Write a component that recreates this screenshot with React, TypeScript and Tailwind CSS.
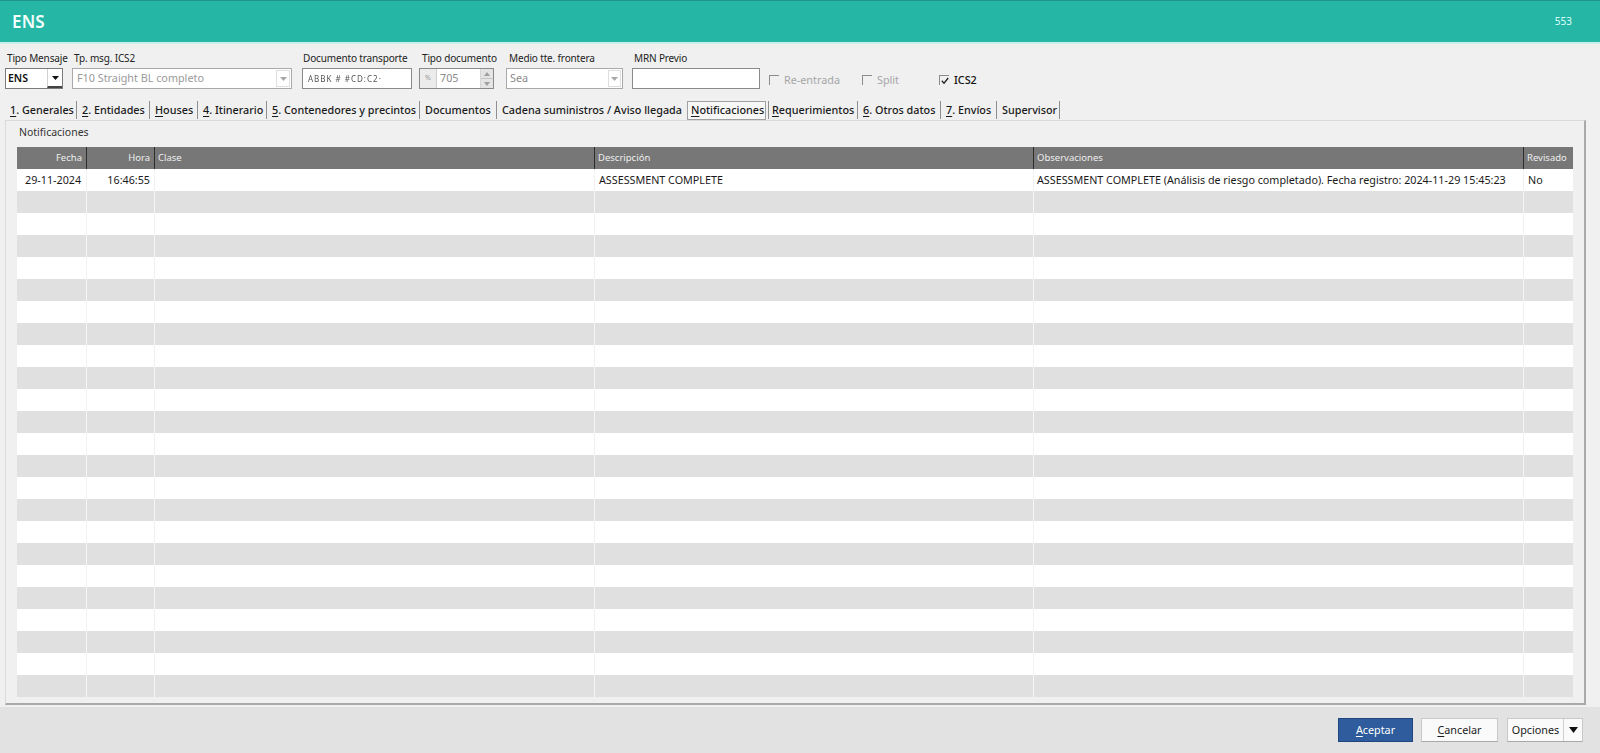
import React from "react";

type Tab = { u?: string; post: string; w: string; sep: boolean; selected?: boolean };

const tabs: Tab[] = [
  { u: "1", post: ". Generales", w: "w-[72px]", sep: true },
  { u: "2", post: ". Entidades", w: "w-[73px]", sep: true },
  { u: "H", post: "ouses", w: "w-[48px]", sep: true },
  { u: "4", post: ". Itinerario", w: "w-[69px]", sep: true },
  { u: "5", post: ". Contenedores y precintos", w: "w-[153px]", sep: true },
  { post: "Documentos", w: "w-[77px]", sep: true },
  { post: "Cadena suministros / Aviso llegada", w: "w-[190px]", sep: false },
  { u: "N", post: "otificaciones", w: "w-[82px]", sep: true, selected: true },
  { u: "R", post: "equerimientos", w: "w-[89px]", sep: true },
  { u: "6", post: ". Otros datos", w: "w-[83px]", sep: true },
  { u: "7", post: ". Envíos", w: "w-[56px]", sep: true },
  { post: "Supervisor", w: "w-[63px]", sep: true },
];

const cols = [
  { w: "w-[69px]", h: "Fecha", right: true },
  { w: "w-[68px]", h: "Hora", right: true },
  { w: "w-[440px]", h: "Clase", right: false },
  { w: "w-[439px]", h: "Descripción", right: false },
  { w: "w-[490px]", h: "Observaciones", right: false },
  { w: "w-[50px]", h: "Revisado", right: false },
];

const dataRow = [
  { t: "29-11-2024", c: "pl-[8px]" },
  { t: "16:46:55", c: "justify-end pr-[4px]" },
  { t: "", c: "" },
  { t: "ASSESSMENT COMPLETE", c: "pl-[4px]" },
  { t: "ASSESSMENT COMPLETE (Análisis de riesgo completado). Fecha registro: 2024-11-29 15:45:23", c: "pl-[3px]" },
  { t: "No", c: "pl-[4px]" },
];

function Arrow({ dark }: { dark?: boolean }) {
  return (
    <svg width="7" height="4" viewBox="0 0 7 4">
      <path d="M0 0 L7 0 L3.5 4 Z" fill={dark ? "#111" : "#a8a8a8"} />
    </svg>
  );
}

function CheckBox({ checked }: { checked?: boolean }) {
  return (
    <span className="relative inline-block w-[10px] h-[10px] border-t border-l border-[#8c8c8c] bg-transparent">
      {checked && (
        <svg className="absolute left-[1px] top-[1px]" width="8" height="8" viewBox="0 0 8 8">
          <path d="M0.8 3.8 L3 6.2 L7.2 1" stroke="#222" strokeWidth="1.3" fill="none" />
        </svg>
      )}
    </span>
  );
}

const lbl = "h-[14px] leading-[14px] text-[10px] tracking-[-0.15px] text-[#222] whitespace-nowrap";

export default function App() {
  const rows = Array.from({ length: 24 }, (_, i) => i);
  return (
    <div className="w-[1600px] h-[753px] overflow-hidden flex flex-col bg-[#f0f0f0] font-['Noto_Sans',sans-serif] text-[#1a1a1a]">
      {/* Title bar */}
      <div className="h-[44px] shrink-0 bg-[#26b6a6] border-t border-[#1e978a] border-b-2 border-b-[#c9f1ea] flex items-center justify-between pl-[12px] pr-[28px]">
        <span className="text-[17px] font-semibold text-[#f2fffc] tracking-[0.2px]">ENS</span>
        <span className="text-[10px] text-[#dcfff8]">553</span>
      </div>

      <div className="flex-1 flex flex-col">
        {/* Form row */}
        <div className="flex items-start pt-[7px] h-[55px] text-[11px]">
          <div className="ml-[5px] w-[58px] flex flex-col">
            <span className={`${lbl} pl-[2px]`}>Tipo Mensaje</span>
            <div className="mt-[3px] h-[21px] bg-white border border-[#7b7b7b] flex items-center">
              <span className="pl-[2px] text-[10.5px] font-semibold text-[#111] flex-1">ENS</span>
              <span className="w-[15px] h-[19px] border-l border-[#d0d0d0] border-b-2 border-b-[#444] flex items-center justify-center">
                <Arrow dark />
              </span>
            </div>
          </div>

          <div className="ml-[9px] w-[220px] flex flex-col">
            <span className={`${lbl} pl-[2px]`}>Tp. msg. ICS2</span>
            <div className="mt-[3px] h-[21px] bg-white border border-[#a9a9a9] flex items-center">
              <span className="pl-[4px] text-[10.8px] text-[#9a9a9a] flex-1 whitespace-nowrap">F10 Straight BL completo</span>
              <span className="w-[14px] h-[17px] mr-[1px] border border-[#dedede] flex items-center justify-center">
                <Arrow />
              </span>
            </div>
          </div>

          <div className="ml-[10px] w-[110px] flex flex-col">
            <span className={`${lbl} pl-[1px]`}>Documento transporte</span>
            <div className="mt-[3px] h-[21px] bg-white border border-[#8a8a8a] flex items-center">
              <span className="pl-[5px] text-[8px] text-[#555] tracking-[1px] blur-[0.5px] whitespace-nowrap">ABBK  #  #CD:C2·</span>
            </div>
          </div>

          <div className="ml-[7px] w-[75px] flex flex-col">
            <span className={`${lbl} pl-[3px]`}>Tipo documento</span>
            <div className="mt-[3px] h-[21px] bg-white border border-[#8a8a8a] flex items-center">
              <span className="w-[17px] h-[19px] bg-[#ececec] border-r border-[#cfcfcf] flex items-center justify-center text-[7px] text-[#999]">%</span>
              <span className="pl-[3px] text-[10.8px] text-[#8a8a8a] flex-1">705</span>
              <span className="w-[13px] h-[19px] flex flex-col border-l border-[#d6d6d6]">
                <span className="flex-1 bg-[#e4e4e4] border-b border-[#c8c8c8] flex items-center justify-center">
                  <svg width="6" height="4" viewBox="0 0 6 4"><path d="M0 4 L6 4 L3 0 Z" fill="#a0a0a0" /></svg>
                </span>
                <span className="flex-1 bg-[#e4e4e4] flex items-center justify-center">
                  <svg width="6" height="4" viewBox="0 0 6 4"><path d="M0 0 L6 0 L3 4 Z" fill="#a0a0a0" /></svg>
                </span>
              </span>
            </div>
          </div>

          <div className="ml-[12px] w-[117px] flex flex-col">
            <span className={`${lbl} pl-[3px]`}>Medio tte. frontera</span>
            <div className="mt-[3px] h-[21px] bg-white border border-[#a9a9a9] flex items-center">
              <span className="pl-[3px] text-[10.8px] text-[#8a8a8a] flex-1">Sea</span>
              <span className="w-[13px] h-[17px] mr-[1px] border border-[#dedede] flex items-center justify-center">
                <Arrow />
              </span>
            </div>
          </div>

          <div className="ml-[9px] w-[128px] flex flex-col">
            <span className={`${lbl} pl-[2px]`}>MRN Previo</span>
            <div className="mt-[3px] h-[21px] bg-white border border-[#8a8a8a]" />
          </div>

          <div className="ml-[9px] mt-[21px] flex items-center gap-[5px] text-[10.8px] text-[#a6a6a6]">
            <CheckBox />
            <span>Re-entrada</span>
          </div>
          <div className="ml-[22px] mt-[21px] flex items-center gap-[5px] text-[10.8px] text-[#a6a6a6]">
            <CheckBox />
            <span>Split</span>
          </div>
          <div className="ml-[40px] mt-[21px] flex items-center gap-[5px] text-[10.8px] text-[#111]">
            <CheckBox checked />
            <span className="font-medium">ICS2</span>
          </div>
        </div>

        {/* Tabs */}
        <div className="flex items-center ml-[5px] mt-[1px] h-[20px] text-[10.8px] text-[#1a1a1a]">
          {tabs.map((t, i) => (
            <div key={i} className={`${t.w} h-[18px] flex items-center shrink-0 ${t.sep ? "border-r border-[#8f8f8f]" : ""}`}>
              {t.selected ? (
                <div className="w-[79px] h-[19px] border border-[#a0a0a0] bg-[#f7f7f7] flex items-center pl-[3px] whitespace-nowrap font-medium">
                  <span className="underline underline-offset-2">{t.u}</span>
                  {t.post}
                </div>
              ) : (
                <span className={`${i === 8 ? "pl-[3px]" : "pl-[5px]"} whitespace-nowrap font-medium`}>
                  {t.u && <span className="underline underline-offset-2">{t.u}</span>}
                  {t.post}
                </span>
              )}
            </div>
          ))}
        </div>

        {/* Panel */}
        <div className="ml-[5px] w-[1581px] h-[585px] border border-[#dadada] border-r-2 border-r-[#a9a9a9] border-b-2 border-b-[#a9a9a9] bg-[#f0f0f0] flex flex-col">
          <div className="h-[14px] mt-[4px] ml-[13px] leading-[14px] text-[10.5px] text-[#333]">Notificaciones</div>
          <div className="ml-[11px] mt-[8px] w-[1556px] flex flex-col">
            <div className="flex h-[22px] bg-[#777777]">
              {cols.map((c, i) => (
                <div
                  key={i}
                  className={`${c.w} h-[22px] flex items-center text-[9.5px] text-[#eeeeee] ${c.right ? "justify-end pr-[4px]" : "pl-[3px]"} ${i > 0 ? "border-l border-[#2c2c2c]" : ""}`}
                >
                  {c.h}
                </div>
              ))}
            </div>
            {rows.map((r) => {
              const gray = r % 2 === 1;
              return (
                <div key={r} className={`flex h-[22px] ${gray ? "bg-[#e0e0e0]" : "bg-white"}`}>
                  {cols.map((c, i) => (
                    <div
                      key={i}
                      className={`${c.w} h-[22px] flex items-center text-[10.75px] text-[#1a1a1a] whitespace-nowrap ${i > 0 ? (gray ? "border-l border-[#f6f6f6]" : "border-l border-[#f1f1f1]") : ""} ${r === 0 ? dataRow[i].c : ""}`}
                    >
                      {r === 0 ? dataRow[i].t : ""}
                    </div>
                  ))}
                </div>
              );
            })}
          </div>
        </div>
      </div>

      {/* Bottom bar */}
      <div className="h-[46px] shrink-0 bg-[#e2e2e2] flex items-center justify-end pr-[17px] gap-[8px] text-[10.8px]">
        <button className="w-[75px] h-[24px] bg-[#2e5c9d] border border-[#1f467e] text-white flex items-center justify-center">
          <span className="underline underline-offset-2">A</span>ceptar
        </button>
        <button className="w-[77px] h-[24px] bg-[#fafafa] border border-[#c9c9c9] border-b-[#a8a8a8] text-[#1a1a1a] flex items-center justify-center">
          <span className="underline underline-offset-2">C</span>ancelar
        </button>
        <div className="w-[76px] h-[24px] bg-[#fafafa] border border-[#c9c9c9] border-b-[#a8a8a8] flex items-center ml-[1px]">
          <span className="flex-1 text-center text-[#1a1a1a]">Opciones</span>
          <span className="w-[19px] h-[22px] border-l border-[#cfcfcf] flex items-center justify-center">
            <svg width="9" height="6" viewBox="0 0 9 6"><path d="M0 0 L9 0 L4.5 6 Z" fill="#111" /></svg>
          </span>
        </div>
      </div>
    </div>
  );
}
